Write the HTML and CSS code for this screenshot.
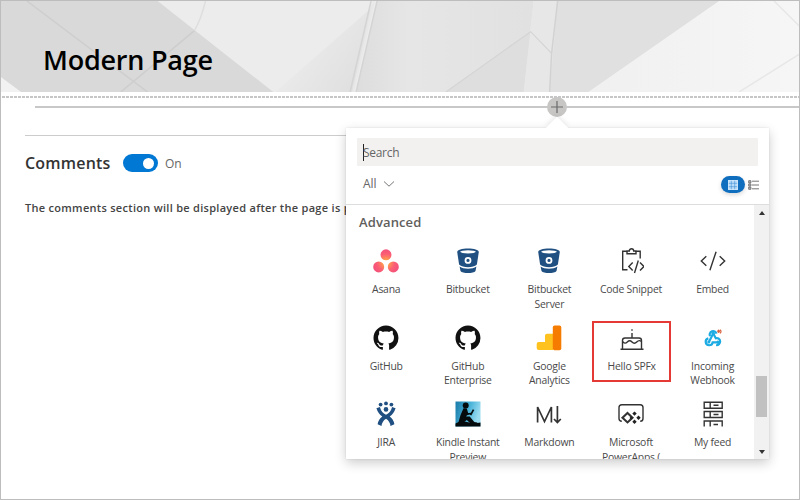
FILE: index.html
```html
<!DOCTYPE html>
<html lang="en">
<head>
<meta charset="utf-8">
<title>Modern Page</title>
<link rel="stylesheet" href="styles.css">
</head>
<body>
<div class="page">
  <header class="banner">
    <svg class="banner-art" viewBox="0 0 800 92" preserveAspectRatio="none" aria-hidden="true">
      <defs>
        <linearGradient id="fold" gradientUnits="userSpaceOnUse" x1="300" y1="30" x2="372" y2="80"><stop offset="0" stop-color="#ececec"/><stop offset="1" stop-color="#dedede"/></linearGradient>
        <linearGradient id="mid" x1="0" y1="0" x2="1" y2="0"><stop offset="0" stop-color="#dddddd"/><stop offset="0.3" stop-color="#e6e6e6"/><stop offset="1" stop-color="#e1e1e1"/></linearGradient>
        <linearGradient id="right" x1="0" y1="0" x2="1" y2="0"><stop offset="0" stop-color="#f0f0f0"/><stop offset="1" stop-color="#f6f6f6"/></linearGradient>
      </defs>
      <rect width="800" height="92" fill="#ececec"/>
      <path d="M0 0H157L273 92H20L0 77Z" fill="#d9d9d9"/>
      <path d="M0 77L20 92H0Z" fill="#f2f2f2"/>
      <path d="M370 8L275 92H353L374 0Z" fill="url(#fold)"/>
      <path d="M377 0H534L524 92H356Z" fill="url(#mid)"/>
      <path d="M446 92L531 31L524 92Z" fill="#dedede"/>
      <path d="M534 0H558L550 92H524Z" fill="#e7e7e7"/>
      <path d="M558 0H720L589 92H550Z" fill="#e0e0e0"/>
      <path d="M720 0H800V92H589Z" fill="url(#right)"/>
      <g fill="none" stroke="#cecece" stroke-width="1.5">
        <path d="M26 0L147 92M194 30L120 92"/>
        <path d="M205 0Q201 17 194 30" stroke="#dedede"/>
        <path d="M371 0L350 92M377 0L356 92" stroke="#d4d4d4"/>
        <path d="M374 0L353 92" stroke="#e8e8e8" stroke-width="2"/>
        <path d="M446 92L531 31L552 53" stroke="#d4d4d4" stroke-width="1.2"/>
        <path d="M558 0L552 53L550 92" stroke="#d2d2d2"/>
        <path d="M775 0L800 25M740 92L800 54" stroke="#e7e7e7"/>
      </g>
    </svg>
    <h1>Modern Page</h1>
  </header>
  <div class="dashes"></div>
  <div class="insert-line"><span class="insert-btn"><svg viewBox="0 0 20 20"><path d="M10 4v12M4 10h12" stroke="#6b6b6b" stroke-width="1.2"/></svg></span></div>

  <section class="comments">
    <div class="comments-head">
      <h2>Comments</h2>
      <span class="toggle"><span class="knob"></span></span>
      <span class="state">On</span>
    </div>
    <p>The comments section will be displayed after the page is published</p>
  </section>

  <div class="picker">
    <div class="picker-head">
      <div class="search"><span class="caret"></span><span>Search</span></div>
      <div class="filters">
        <span class="all">All</span>
        <svg class="chevron" viewBox="0 0 12 12"><path d="M1 3.5l5 4.7 5-4.7" fill="none" stroke="#777" stroke-width="1"/></svg>
        <span class="grid-btn"><svg viewBox="0 0 10 10"><path d="M0 0h10v10H0z" fill="#b9dcf8"/><path d="M3.3 0v10M6.7 0v10M0 3.3h10M0 6.7h10" stroke="#3f91d8" stroke-width=".6"/><path d="M.4.4h9.2v9.2H.4z" fill="none" stroke="#d5eafa" stroke-width=".8"/></svg></span>
        <svg class="list-ico" viewBox="0 0 11 10"><path d="M.7.7h2.2v2.2H.7zM.7 3.9h2.2v2.2H.7zM.7 7.1h2.2v2.2H.7z" fill="#bbb" stroke="#6d6d6d" stroke-width=".9"/><path d="M4 1.2h7M4 5h7M4 8.8h7" stroke="#777" stroke-width="1"/></svg>
      </div>
    </div>
    <div class="picker-body">
      <div class="list">
        <h3>Advanced</h3>
        <div class="tiles">
          <div class="tile"><svg viewBox="0 0 26 26"><defs><radialGradient id="asana" gradientUnits="userSpaceOnUse" cx="13" cy="14.5" r="13"><stop offset="0" stop-color="#ffb04a"/><stop offset=".25" stop-color="#ff9a4f"/><stop offset=".65" stop-color="#fb5f74"/><stop offset="1" stop-color="#f4527a"/></radialGradient></defs><g fill="url(#asana)"><circle cx="13" cy="6.8" r="5.5"/><circle cx="5.7" cy="18.9" r="5.5"/><circle cx="20.3" cy="18.9" r="5.5"/></g></svg><span>Asana</span></div>
          <div class="tile"><svg viewBox="0 0 26 26"><use href="#bucket"/></svg><span>Bitbucket</span></div>
          <div class="tile"><svg viewBox="0 0 26 26"><g id="bucket"><path d="M2.2 4C2.2 2 7 .6 13 .6S23.8 2 23.8 4L21.9 16.6C20 18.4 16.5 19.2 13 19.2S6 18.4 4.1 16.6Z" fill="#205081"/><ellipse cx="13" cy="3.8" rx="7.8" ry="1.6" fill="#fff"/><circle cx="13" cy="12.4" r="2.5" fill="#205081" stroke="#fff" stroke-width="1.8"/><path d="M4.6 18.5C8.5 21.4 17.5 21.4 21.4 18.5L20.5 23C18.8 25.7 7.2 25.7 5.5 23Z" fill="#205081"/></g></svg><span>Bitbucket<br>Server</span></div>
          <div class="tile"><svg viewBox="0 0 26 26" class="line"><path d="M9.5 21.8H4.7V3.2H9M17 3.2h5.2v7.3M9 5.8V3h2.3C11.3 0 15.7 0 15.7 3H18v2.8Z"/><path d="M14.7 14.5l-3.9 4 3.9 4M22 14.5l3.9 4-3.9 4M20.3 12.5L16.5 25"/></svg><span>Code Snippet</span></div>
          <div class="tile"><svg viewBox="0 0 26 26" class="line"><path d="M6.3 8.3L1.3 13l5 4.7M19.7 8.3l5 4.7-5 4.7M16.1 3.7L9.9 22.3"/></svg><span>Embed</span></div>

          <div class="tile"><svg viewBox="0 0 26 26"><g id="octo" transform="translate(.5 .5) scale(1.56)"><path fill="#111" d="M8 0C3.58 0 0 3.58 0 8c0 3.54 2.29 6.53 5.47 7.59.4.07.55-.17.55-.38 0-.19-.01-.82-.01-1.49-2.01.37-2.53-.49-2.69-.94-.09-.23-.48-.94-.82-1.13-.28-.15-.68-.52-.01-.53.63-.01 1.08.58 1.23.82.72 1.21 1.87.87 2.33.66.07-.52.28-.87.51-1.07-1.78-.2-3.64-.89-3.64-3.95 0-.87.31-1.59.82-2.15-.08-.2-.36-1.02.08-2.12 0 0 .67-.21 2.2.82.64-.18 1.32-.27 2-.27s1.36.09 2 .27c1.53-1.04 2.2-.82 2.2-.82.44 1.1.16 1.92.08 2.12.51.56.82 1.27.82 2.15 0 3.07-1.87 3.75-3.65 3.95.29.25.54.73.54 1.48 0 1.07-.01 1.93-.01 2.2 0 .21.15.46.55.38A8.01 8.01 0 0 0 16 8c0-4.42-3.58-8-8-8Z"/></g></svg><span>GitHub</span></div>
          <div class="tile"><svg viewBox="0 0 26 26"><use href="#octo"/></svg><span>GitHub<br>Enterprise</span></div>
          <div class="tile"><svg viewBox="0 0 26 26"><path d="M.7 19q0-2 2-2H9v-6.3q0-2 2-2h6V25H2.7q-2 0-2-2Z" fill="#ffc21f"/><rect x="16.8" y=".6" width="8.5" height="24.6" rx="1.8" fill="#f57c00"/></svg><span>Google<br>Analytics</span></div>
          <div class="tile picked"><svg viewBox="0 0 26 26" class="line"><path d="M1.5 24.3h23M3.500 24V15.500q0-2.500 2.500-2.500h14q2.500 0 2.500 2.500V24M13 8v5"/><path d="M3.500 16.500q2.400 3 4.800.5 2.400-2.500 4.700 0 2.400 2.500 4.700 0 2.400-2.500 4.800-.5M13 4.200v1.600"/></svg><span>Hello SPFx</span></div>
          <div class="tile"><svg viewBox="0 0 26 26"><g transform="translate(3.6 1.6) scale(.76)"><g fill="none" stroke="#1cabe2" stroke-width="2.9"><path d="M8.400 12.500A4.600 4.600 0 1 1 17 9.300M12.500 9.200l-2.700 5.500-2.700 5.200"/><path d="M6.200 15.500a4.600 4.600 0 1 0 5.700 5.200H20M12.900 9.500L16 15.200a4.600 4.600 0 1 1 .5 9"/></g><circle cx="12.700" cy="8.800" r="2" fill="#1cabe2"/><circle cx="6.800" cy="20.300" r="2" fill="#1cabe2"/><circle cx="18.800" cy="20.300" r="2" fill="#1cabe2"/></g><ellipse cx="18.600" cy="6.300" rx="1.300" ry="1.800" fill="#d75f3b"/><path d="M20 4.700q2 1.800 0 3.700" fill="none" stroke="#d75f3b" stroke-width="1.200"/></svg><span>Incoming<br>Webhook</span></div>

          <div class="tile"><svg viewBox="0 0 26 26"><g fill="#205081"><circle cx="13" cy="2.400" r="1.900"/><circle cx="7.600" cy="3.600" r="1.900"/><circle cx="18.400" cy="3.600" r="1.900"/><circle cx="13" cy="8.400" r="2.300"/><path d="M3.400 7.300l3.500-1.200q1.600 6 6.100 7.700 4.500-1.700 6.100-7.700l3.500 1.200q-1.700 5.400-5.900 8.300 3.800 2.600 4.700 7.700l-3.900 1.800q-.7-5.200-4.500-7.300-3.800 2.100-4.500 7.300l-3.900-1.800q.9-5.100 4.700-7.700-4.200-2.900-5.900-8.300Z"/></g></svg><span>JIRA</span></div>
          <div class="tile"><svg viewBox="0 0 26 26"><defs><linearGradient id="sky" x1="0" y1="0" x2="1" y2=".3"><stop stop-color="#187aa8"/><stop offset=".6" stop-color="#4db5da"/><stop offset="1" stop-color="#9bdcf1"/></linearGradient></defs><path d="M.5.5h25v25H.5z" fill="url(#sky)"/><path d="M.5 22.500Q6 19 12 21t13.500.5v4H.5Z" fill="#050a0d"/><circle cx="10.700" cy="4.600" r="3" fill="#050a0d"/><path d="M8.500 7.200l3.300.3 1.300 4.500 3.300-.3.300 1.300-4.700 1.200-.9 1.200 3.600.2 4.600 5.300 3 .6v1.500H16l-4.200-4-4.600 3.500-3.700-1.600Q5 14.200 8.500 7.200Z" fill="#050a0d"/><path d="M17.800 8.200l1.500.7-3 5.500-1.500-.7Z" fill="#050a0d"/></svg><span>Kindle Instant<br>Preview</span></div>
          <div class="tile"><svg viewBox="0 0 26 26" class="line"><path d="M1.600 21.500V6l6.900 14.500L15.400 6v15.500M21.400 5v16M18 18l3.400 3.600L24.800 18" stroke-width="1.700"/></svg><span>Markdown</span></div>
          <div class="tile"><svg viewBox="0 0 26 26" class="line"><path d="M3.800 20.300Q1 20.300 1 17.500V6.600Q1 3.800 3.800 3.800h18.400Q25 3.800 25 6.600v10.900q0 2.800-2.800 2.800"/><path d="M9.500 12l5 4.700-5 4.700-5-4.700Z" stroke-width="2.100"/><path d="M16.500 10.400l2.200 2.200-2.200 2.200-2.200-2.200ZM20.500 14.500l2.200 2.200-2.200 2.200-2.200-2.200ZM16.500 18.600l2.200 2.200-2.200 2.200-2.200-2.200ZM13.200 15.200l1.700 1.700-1.700 1.700-1.700-1.700Z" fill="#222" stroke="none"/></svg><span>Microsoft<br>PowerApps (</span></div>
          <div class="tile"><svg viewBox="0 0 26 26" class="line"><path d="M4.200 1.200h18v6h-18zM4.200 10.500h18v6h-18zM4.200 25.500v-5.500h18v5.500M10.200 1.200v6M10.200 10.500v6M10.200 20v5.500M13.500 4.200h5M13.500 13.500h5M13.500 23.500h4.500"/></svg><span>My feed</span></div>
        </div>
      </div>
      <div class="scrollbar"><span class="up"></span><span class="thumb"></span><span class="down"></span></div>
    </div>
  </div>
</div>
</body>
</html>
```
FILE: styles.css
```css
* { box-sizing: border-box; }
body { margin: 0; font-family: "Open Sans", sans-serif; color: #333; background: #fff; }
.page { position: relative; width: 800px; height: 500px; border: 1px solid #bdbdbd; overflow: hidden; }
h1, h2, h3, p { margin: 0; }

.banner { position: relative; height: 91px; padding: 40px 0 0 42px; }
.banner-art { position: absolute; inset: 0; width: 100%; height: 100%; }
h1 { position: relative; color: #000; font-size: 27px; line-height: 38px; font-weight: 600; letter-spacing: -.23px; white-space: nowrap; }

.dashes { height: 2px; margin: 4px 0 0 1px; background: repeating-linear-gradient(90deg, #c6c6c6 0 3px, #fff 3px 4px); }
.insert-line { position: relative; height: 2px; margin: 8px 0 0 34px; background: #c8c8c8; }
.insert-btn { position: absolute; left: 512px; top: -9px; width: 20px; height: 20px; border-radius: 50%; background: #c7c6c5; }
.insert-btn svg { display: block; width: 20px; height: 20px; }

.comments { margin: 27px 32px 0 24px; border-top: 1px solid #ccc; }
.comments-head { display: flex; align-items: center; height: 28px; margin-top: 13px; }
h2 { width: 98px; font-size: 16px; font-weight: 600; letter-spacing: .2px; }
.toggle { display: flex; justify-content: flex-end; align-items: center; width: 35px; height: 18px; padding-right: 4px; border-radius: 9px; background: #0078d4; }
.knob { width: 11px; height: 11px; border-radius: 50%; background: #fff; }
.state { margin-left: 7px; font-size: 12px; color: #666; }
.comments p { margin-top: 22px; font-size: 11px; line-height: 18px; font-weight: 600; letter-spacing: .29px; color: #444; white-space: nowrap; }

.picker { position: absolute; left: 345px; top: 127px; width: 423px; height: 331px; background: #fff; box-shadow: 0 4px 11px rgba(0,0,0,.2), 0 0 2px rgba(0,0,0,.1); }
.picker::before { content: ""; position: absolute; left: 203px; top: -8px; width: 16px; height: 16px; background: #fff; transform: rotate(45deg); box-shadow: -2px -2px 5px rgba(0,0,0,.07); }
.picker-head { position: relative; height: 77px; padding: 10px 10px 0 11px; border-bottom: 1px solid #ddd; background: #fff; }
.search { display: flex; align-items: center; height: 28px; margin-right: 1px; padding: 1px 0 0 6px; background: #f2f1f0; font-size: 12px; letter-spacing: -.3px; color: #666; border-radius: 1px; }
.caret { width: 1px; height: 17px; margin-right: -1px; background: #222; }
.filters { display: flex; align-items: center; height: 35px; padding-left: 6px; font-size: 12px; color: #666; }
.chevron { width: 12px; height: 12px; margin-left: 6px; }
.grid-btn { display: flex; align-items: center; justify-content: center; width: 24px; height: 17px; margin: 2px 0 0 auto; border-radius: 9px; background: #106ebe; box-shadow: 0 2px 4px rgba(0,0,0,.15); }
.grid-btn svg { width: 10px; height: 10px; }
.list-ico { width: 11px; height: 10px; margin: 2px 0 0 3px; }

.picker-body { display: flex; height: 254px; overflow: hidden; }
.list { flex: 1; min-width: 0; }
h3 { height: 38px; padding: 8px 0 0 13px; font-size: 13px; line-height: 18px; font-weight: 600; color: #605e5c; letter-spacing: .12px; }
.tiles { display: grid; grid-template-columns: repeat(5, 81.6px); grid-auto-rows: 76.5px; margin-left: -.6px; }
.tile { display: flex; flex-direction: column; align-items: center; padding-top: 5px; }
.tile svg { width: 26px; height: 26px; }
.tile span { margin-top: 8px; font-size: 10.4px; line-height: 14.5px; letter-spacing: -.22px; text-align: center; white-space: nowrap; color: #4a4a4a; }
.line { fill: none; stroke: #333; stroke-width: 1.4; }
.picked { width: 79px; height: 61px; margin: 1px 0 0 2px; padding-top: 4px; outline: 2px solid #e53935; outline-offset: -2px; }

.scrollbar { display: flex; flex-direction: column; align-items: center; width: 15px; padding: 6px 0 5px; background: #f1f1f1; }
.up { border: solid transparent; border-width: 0 3px 4px; border-bottom-color: #333; }
.thumb { width: 11px; height: 41px; margin-top: 161px; background: #c1c1c1; }
.down { margin-top: auto; border: solid transparent; border-width: 4px 3px 0; border-top-color: #333; }
```
